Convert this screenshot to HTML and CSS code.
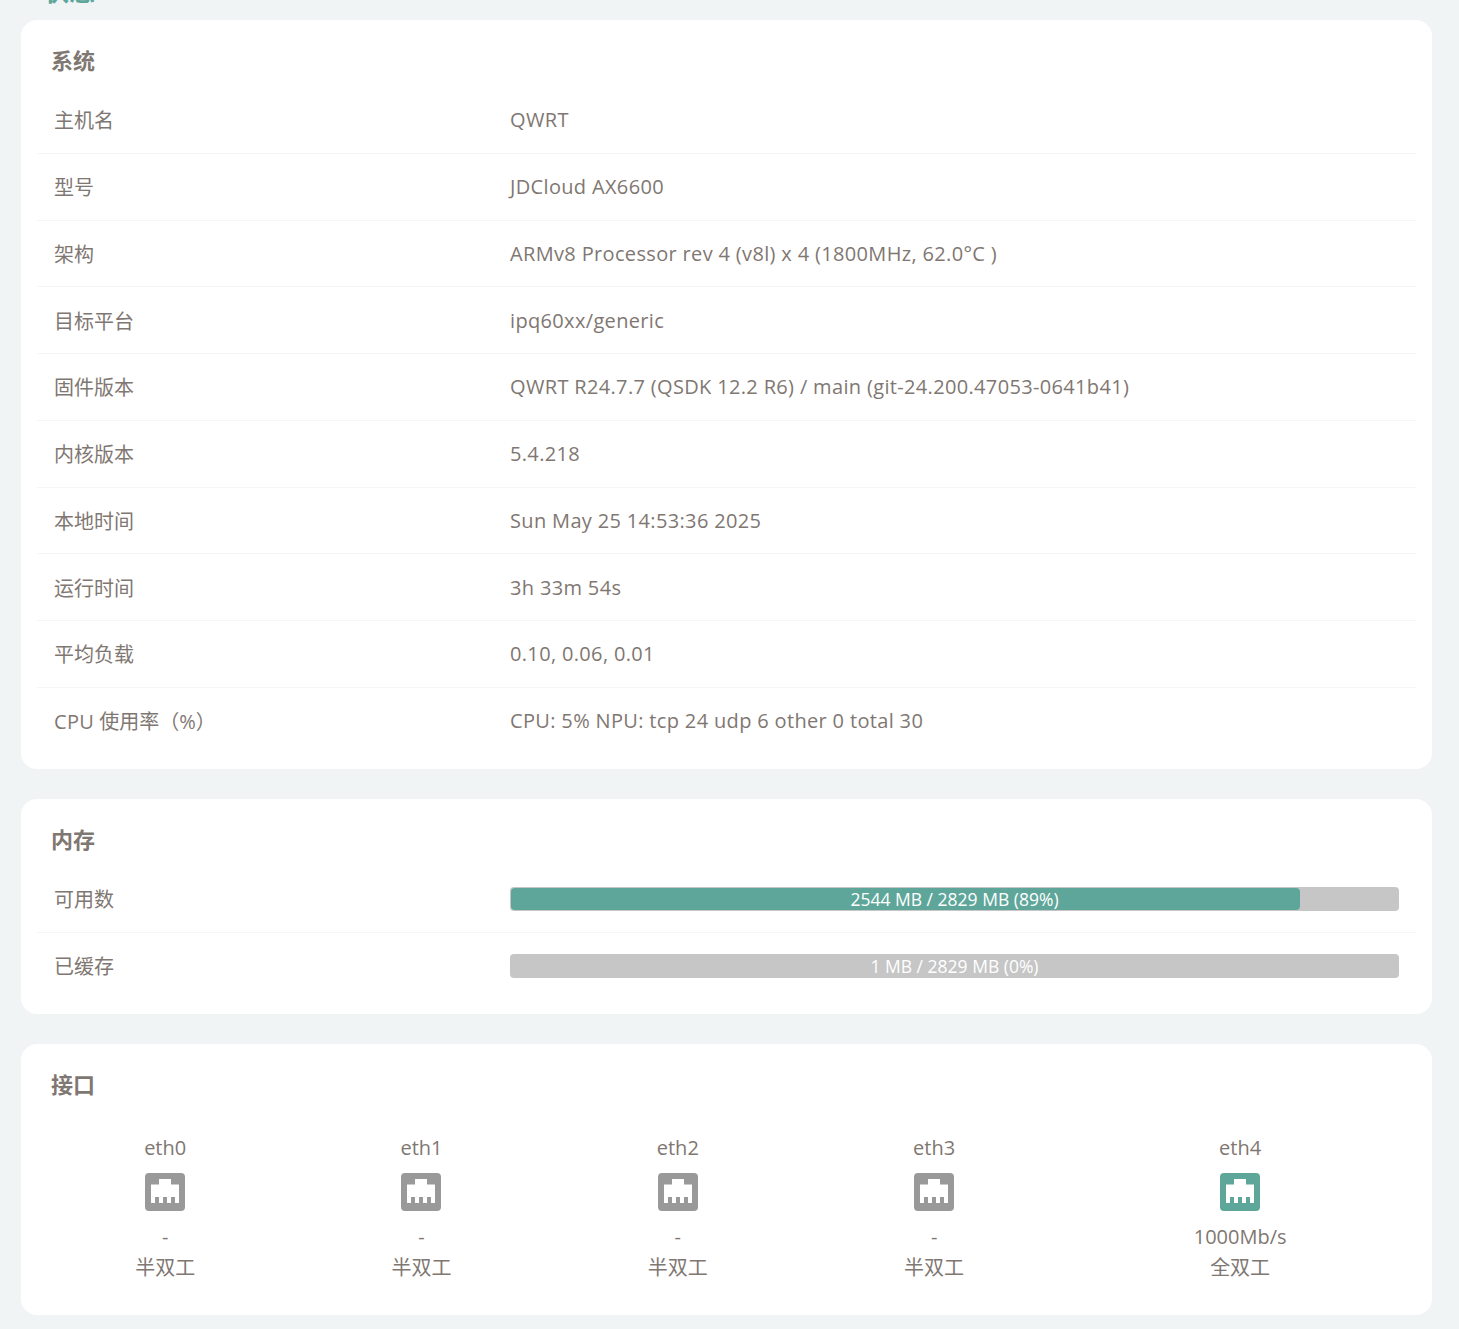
FILE: index.html
```html
<!DOCTYPE html>
<html lang="zh-CN">
<head>
<meta charset="utf-8">
<title>状态</title>
<link rel="stylesheet" href="styles.css">
</head>
<body>
<svg class="defs" width="0" height="0" aria-hidden="true">
  <symbol id="port" viewBox="0 0 40 38">
    <path fill-rule="evenodd" d="M4 0H36A4 4 0 0 1 40 4V34A4 4 0 0 1 36 38H4A4 4 0 0 1 0 34V4A4 4 0 0 1 4 0ZM14 6V11.500H6V30H10V24H14V30H18V24H22V30H26V24H30V30H34V11.500H26V6Z"/>
  </symbol>
</svg>
<main class="page">
  <h2 class="page-title">状态</h2>
  <section class="card">
    <h3 class="card-title">系统</h3>
    <div class="rows">
      <div class="row"><div class="label">主机名</div><div class="value">QWRT</div></div>
      <div class="row"><div class="label">型号</div><div class="value">JDCloud AX6600</div></div>
      <div class="row"><div class="label">架构</div><div class="value">ARMv8 Processor rev 4 (v8l) x 4 (1800MHz, 62.0°C )</div></div>
      <div class="row"><div class="label">目标平台</div><div class="value">ipq60xx/generic</div></div>
      <div class="row"><div class="label">固件版本</div><div class="value">QWRT R24.7.7 (QSDK 12.2 R6) / main (git-24.200.47053-0641b41)</div></div>
      <div class="row"><div class="label">内核版本</div><div class="value">5.4.218</div></div>
      <div class="row"><div class="label">本地时间</div><div class="value">Sun May 25 14:53:36 2025</div></div>
      <div class="row"><div class="label">运行时间</div><div class="value">3h 33m 54s</div></div>
      <div class="row"><div class="label">平均负载</div><div class="value">0.10, 0.06, 0.01</div></div>
      <div class="row"><div class="label"><span class="latin">CPU</span> 使用率（%）</div><div class="value">CPU: 5% NPU: tcp 24 udp 6 other 0 total 30</div></div>
    </div>
  </section>
  <section class="card">
    <h3 class="card-title">内存</h3>
    <div class="rows">
      <div class="row"><div class="label">可用数</div><div class="value"><div class="bar"><div class="fill" style="width:89%"></div><span class="bar-text">2544 MB / 2829 MB (89%)</span></div></div></div>
      <div class="row"><div class="label">已缓存</div><div class="value"><div class="bar"><div class="fill" style="width:0"></div><span class="bar-text">1 MB / 2829 MB (0%)</span></div></div></div>
    </div>
  </section>
  <section class="card">
    <h3 class="card-title">接口</h3>
    <div class="ports">
      <div class="port"><div>eth0</div><svg class="port-icon"><use href="#port"/></svg><div>-</div><div class="duplex">半双工</div></div>
      <div class="port"><div>eth1</div><svg class="port-icon"><use href="#port"/></svg><div>-</div><div class="duplex">半双工</div></div>
      <div class="port"><div>eth2</div><svg class="port-icon"><use href="#port"/></svg><div>-</div><div class="duplex">半双工</div></div>
      <div class="port"><div>eth3</div><svg class="port-icon"><use href="#port"/></svg><div>-</div><div class="duplex">半双工</div></div>
      <div class="port wide"><div>eth4</div><svg class="port-icon up"><use href="#port"/></svg><div>1000Mb/s</div><div class="duplex">全双工</div></div>
    </div>
  </section>
</main>
</body>
</html>
```
FILE: styles.css
```css
* { box-sizing: border-box; }
html, body { margin: 0; height: 1329px; overflow: hidden; }
body {
  background: #f0f4f5;
  color: #7f7772;
  font-family: "Open Sans", "Noto Sans CJK SC", sans-serif;
  font-size: 20px;
}
.defs { position: absolute; }
.page { padding: 0 27px 0 21px; }
.page-title {
  margin: -25px 0 0 22px;
  height: 45px;
  font-size: 26px;
  line-height: 32px;
  font-weight: 700;
  color: #5ea69a;
}
.card {
  background: #fff;
  border-radius: 16px;
  padding: 16px;
  margin-bottom: 30px;
}
.card-title {
  margin: 0;
  padding-left: 14px;
  height: 51px;
  font-size: 22px;
  line-height: 49px;
  font-weight: 700;
  color: #7f7772;
}
.row {
  display: flex;
  align-items: center;
  height: 66.75px;
  padding: 0 17px;
  border-bottom: 1px solid #f5f7f7;
}
.row:last-child { border-bottom: 0; height: 65px; }
.row:last-child .bar { margin-top: 2px; }
.label { width: 456px; flex: none; }
.latin { letter-spacing: 0.3px; }
.value { flex: 1; min-width: 0; letter-spacing: 0.34px; }
.bar {
  position: relative;
  height: 24px;
  padding: 1px;
  background: #c6c6c6;
  border-radius: 4px;
  overflow: hidden;
}
.fill {
  height: 22px;
  background: #5ea69a;
  border-radius: 4px;
}
.bar-text {
  position: absolute;
  inset: 0;
  text-align: center;
  color: #fff;
  font-size: 17.5px;
  letter-spacing: 0;
  line-height: 24px;
}
.ports {
  display: grid;
  grid-template-columns: repeat(4, 1fr) 1.38fr;
  padding: 22px 0 16px;
}
.port {
  display: flex;
  flex-direction: column;
  align-items: center;
  line-height: 30px;
}
.port.wide { padding-left: 2px; }
.port-icon {
  width: 40px;
  height: 38px;
  margin: 10px 0 11px;
  fill: #999999;
}
.port-icon.up { fill: #5ea69a; }
.duplex { margin-top: 1px; }
```
